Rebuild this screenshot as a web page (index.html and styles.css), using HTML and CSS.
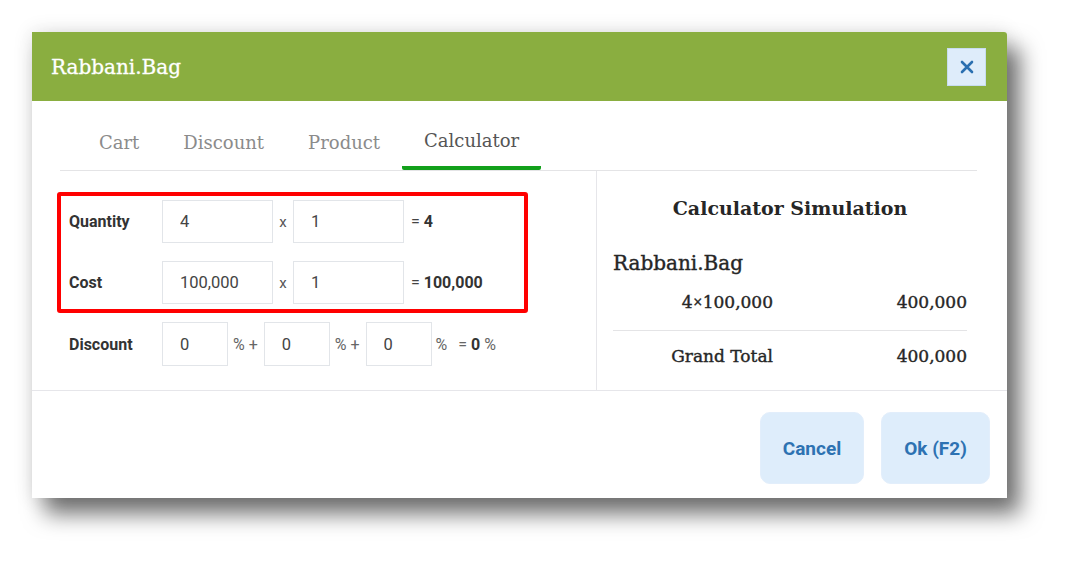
FILE: index.html
```html
<!DOCTYPE html>
<html>
<head>
<meta charset="utf-8" />
<title>Rabbani.Bag</title>
<link rel="stylesheet" href="styles.css">
</head>
<body>
<div class="dialog">
  <div class="dialog-head">
    <h1>Rabbani.Bag</h1>
    <button class="close" title="Close">
      <svg width="14" height="14" viewBox="0 0 14 14"><path d="M2 2 L12 12 M12 2 L2 12" stroke="#2a6fb0" stroke-width="2.6" stroke-linecap="round" fill="none"/></svg>
    </button>
  </div>

  <ul class="tabs">
    <li>Cart</li>
    <li>Discount</li>
    <li>Product</li>
    <li class="active">Calculator</li>
  </ul>

  <div class="dialog-body">
    <div class="calc">
      <div class="mark">
        <div class="row">
          <label>Quantity</label>
          <input type="text" class="wide" value="4" />
          <span class="op">x</span>
          <input type="text" class="wide" value="1" />
          <span class="res">= <b>4</b></span>
        </div>
        <div class="row">
          <label>Cost</label>
          <input type="text" class="wide" value="100,000" />
          <span class="op">x</span>
          <input type="text" class="wide" value="1" />
          <span class="res">= <b>100,000</b></span>
        </div>
      </div>
      <div class="row plain">
        <label>Discount</label>
        <input type="text" class="small" value="0" />
        <span class="pct">% +</span>
        <input type="text" class="small" value="0" />
        <span class="pct">% +</span>
        <input type="text" class="small" value="0" />
        <span class="pct last">%</span>
        <span class="res tail">= <b>0</b> %</span>
      </div>
    </div>

    <div class="sim">
      <h2>Calculator Simulation</h2>
      <h3>Rabbani.Bag</h3>
      <div class="sim-line">
        <span>4<small>×</small>100,000</span>
        <span>400,000</span>
      </div>
      <div class="sim-line total">
        <span>Grand Total</span>
        <span>400,000</span>
      </div>
    </div>
  </div>

  <div class="dialog-foot">
    <button class="btn cancel">Cancel</button>
    <button class="btn ok">Ok (F2)</button>
  </div>
</div>
</body>
</html>
```

FILE: styles.css
```css
html, body {
  margin: 0;
  background: #fff;
}
body {
  box-sizing: border-box;
  min-height: 564px;
  padding: 32px 0 0 32px;
  font-family: Roboto, 'Liberation Sans', sans-serif;
}
.dialog {
  width: 975px;
  background: #fff;
  border-top-right-radius: 3px;
  box-shadow: 13px 16px 22px rgba(0, 0, 0, .55), 0 0 20px rgba(0, 0, 0, .12);
}
.dialog-head {
  height: 69px;
  background: #8aae40;
  display: flex;
  align-items: center;
  justify-content: space-between;
  padding: 0 21px 0 19px;
  border-top-right-radius: 3px;
}
.dialog-head h1 {
  margin: 0;
  color: #fff;
  font-family: 'DejaVu Serif', serif;
  font-weight: normal;
  font-size: 20px;
  -webkit-text-stroke: 0.3px #fff;
}
.close {
  width: 39px;
  height: 38px;
  padding: 0;
  background: #deecfa;
  border: 1px solid #c7dcef;
  display: flex;
  align-items: center;
  justify-content: center;
}

/* tabs */
.tabs {
  list-style: none;
  margin: 0 30px 0 28px;
  padding: 0 0 0 17px;
  display: flex;
  border-bottom: 1px solid #e4e4e6;
}
.tabs li {
  padding: 30px 22px 11px;
  line-height: 24px;
  font-family: 'DejaVu Serif', serif;
  font-size: 18px;
  color: #8b8b8b;
  border-bottom: 4px solid transparent;
}
.tabs li.active {
  color: #555;
  padding: 28px 22px 13px;
  border-bottom-color: #12a01b;
  border-radius: 2px;
}

/* body */
.dialog-body {
  display: flex;
  height: 219px;
  border-bottom: 1px solid #e6e6ea;
}
.calc {
  width: 539px;
  padding: 21px 0 0 25px;
  border-right: 1px solid #e6e6ea;
}
.mark {
  width: 455px;
  border: 4px solid #f00;
  border-radius: 3px;
  padding: 4px 0 5px 8px;
  display: flex;
  flex-direction: column;
  gap: 18px;
}
.row {
  display: flex;
  align-items: center;
  height: 43px;
}
.row.plain {
  margin-top: 9px;
  padding-left: 12px;
  height: 44px;
}
.row label {
  width: 93px;
  font-weight: bold;
  font-size: 16px;
  color: #333;
}
.row input {
  box-sizing: border-box;
  height: 100%;
  border: 1px solid #e2e5e9;
  padding: 0 0 0 17px;
  font-family: Roboto, 'Liberation Sans', sans-serif;
  font-size: 16.5px;
  color: #444;
  outline: none;
}
.row input.wide {
  width: 111px;
}
.row input.small {
  width: 66px;
}
.op {
  width: 20px;
  text-align: center;
  font-size: 15px;
  color: #555;
}
.pct {
  margin: 0 6px 0 5px;
  font-size: 16px;
  color: #666;
}
.pct.last {
  margin: 0 0 0 4px;
}
.res {
  margin-left: 7px;
  font-size: 16px;
  color: #444;
}
.res b {
  color: #333;
}
.res.tail {
  margin-left: 11px;
  color: #666;
}

/* simulation */
.sim {
  flex: 1;
  padding: 0 40px 0 16px;
  font-family: 'DejaVu Serif', serif;
  color: #262626;
}
.sim h2 {
  margin: 24px 0 0;
  text-align: center;
  font-size: 19px;
  line-height: 26px;
  font-weight: bold;
}
.sim h3 {
  margin: 29px 0 0;
  font-size: 20px;
  line-height: 26px;
  font-weight: normal;
  -webkit-text-stroke: 0.4px #262626;
}
.sim-line {
  display: flex;
  justify-content: space-between;
  font-size: 17px;
  line-height: 24px;
  padding: 14px 0 16px 67px;
  -webkit-text-stroke: 0.4px #262626;
}
.sim-line span:first-child {
  width: 93px;
  text-align: right;
}
.sim-line small {
  font-size: 12px;
  vertical-align: 2px;
}
.sim-line.total {
  border-top: 1px solid #e4e4e6;
  padding: 13px 0 0 52px;
}
.sim-line.total span:first-child {
  width: 108px;
}

/* footer */
.dialog-foot {
  height: 107px;
  box-sizing: border-box;
  display: flex;
  justify-content: flex-end;
  align-items: flex-start;
  gap: 17px;
  padding: 21px 17px 0 0;
}
.btn {
  height: 72px;
  border: 1px solid #e2eefb;
  border-radius: 10px;
  background: #deedfb;
  color: #2d72b2;
  font-family: Roboto, 'Liberation Sans', sans-serif;
  font-weight: bold;
  font-size: 19px;
}
.btn.cancel {
  width: 104px;
}
.btn.ok {
  width: 109px;
}
```
